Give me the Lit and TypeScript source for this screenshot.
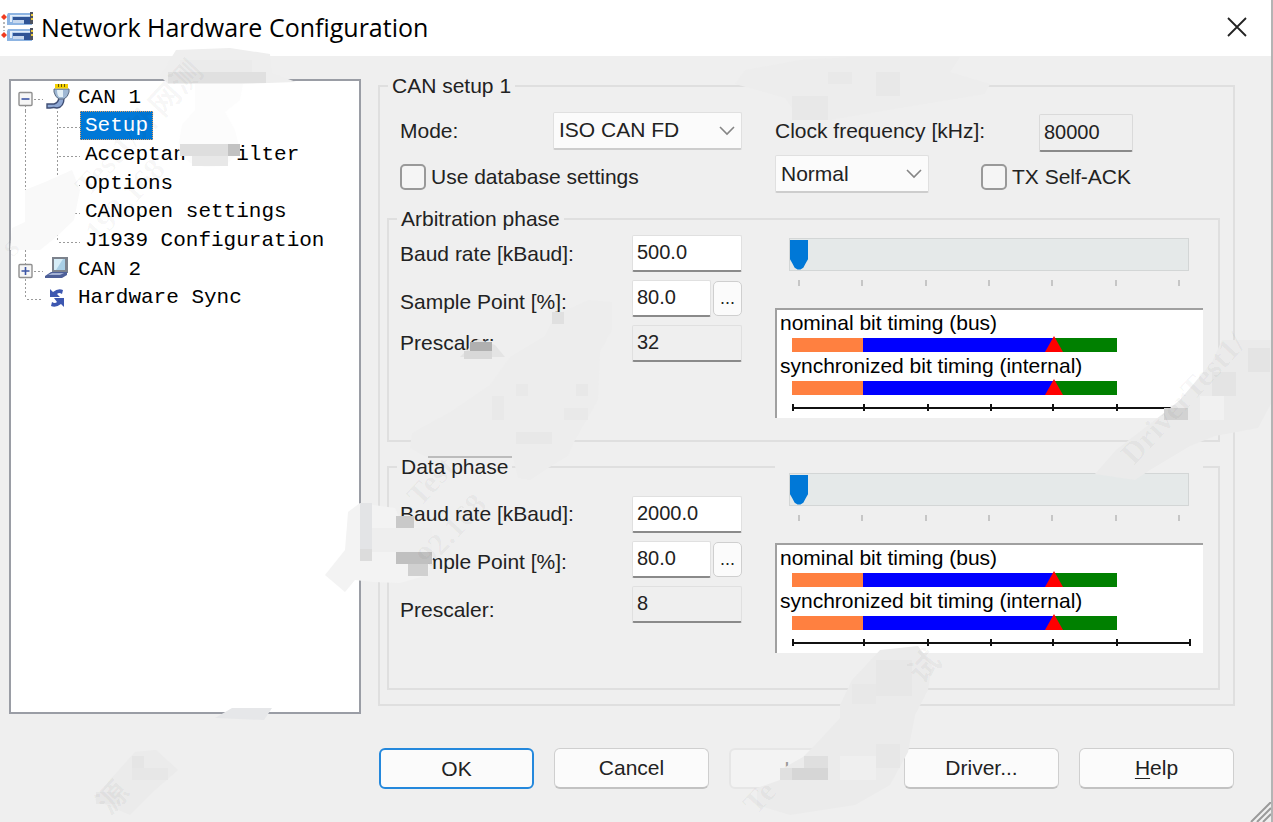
import { LitElement, html, svg, css } from "lit";
import { customElement, property, state } from "lit/decorators.js";

type Cell = [x: number, y: number, w: number, h: number, color: string];

interface Phase {
  id: string;
  title: string;
  baud: string;
  sample: string;
  prescaler: string;
}

const PHASES: Phase[] = [
  { id: "arbitration", title: "Arbitration phase", baud: "500.0", sample: "80.0", prescaler: "32" },
  { id: "data", title: "Data phase", baud: "2000.0", sample: "80.0", prescaler: "8" },
];

const CHILDREN = ["Setup", "Acceptance Filter", "Options", "CANopen settings", "J1939 Configuration"];

@customElement("bit-timing")
class BitTiming extends LitElement {
  static styles = css`
    :host {
      display: block;
      background: #fff;
      border-top: 2px solid #a0a0a0;
      border-left: 2px solid #a0a0a0;
      padding: 0 12px 7px 3px;
      color: #000;
    }
    .caption {
      line-height: 26px;
      white-space: nowrap;
    }
    .area {
      margin: 2px 0 1px 12px;
    }
    .bar {
      display: flex;
      position: relative;
      height: 14px;
      width: 81.4%;
    }
    .sync {
      background: #ff8040;
      flex: 71;
    }
    .seg1 {
      background: #0000ff;
      flex: 190;
    }
    .seg2 {
      background: #008000;
      flex: 63;
    }
    .marker {
      position: absolute;
      left: 80.6%;
      bottom: 0;
      margin-left: -9px;
      width: 18px;
      height: 16px;
      fill: #f00;
    }
    .axis {
      display: flex;
      height: 7px;
      margin: 9px 0 0 12px;
      border-right: 2px solid #111;
      background: linear-gradient(#111, #111) center / 100% 2px no-repeat;
    }
    .tick {
      border-left: 2px solid #111;
    }
  `;

  private bar() {
    return html`<div class="bar">
      <span class="sync"></span><span class="seg1"></span><span class="seg2"></span>
      <svg class="marker" viewBox="0 0 18 16"><path d="M9 0 L18 16 H0 Z" /></svg>
    </div>`;
  }

  render() {
    return html`
      <div class="caption">nominal bit timing (bus)</div>
      <div class="area">${this.bar()}</div>
      <div class="caption">synchronized bit timing (internal)</div>
      <div class="area">${this.bar()}</div>
      <div class="axis">
        ${[71, 64, 63, 62, 64, 73].map((n) => html`<span class="tick" style="flex:${n}"></span>`)}
      </div>
    `;
  }
}

@customElement("hardware-tree")
class HardwareTree extends LitElement {
  @state() private selected = "Setup";

  static styles = css`
    :host {
      display: block;
      box-sizing: border-box;
      background: #fff;
      border: 2px solid #9a9da5;
      padding: 2px 7px;
      font: 21px "Liberation Mono", "DejaVu Sans Mono", monospace;
      color: #000;
    }
    .list {
      display: grid;
      grid-auto-rows: 1fr;
      height: 229px;
      margin: 0;
      padding: 0;
      list-style: none;
    }
    .row {
      display: flex;
      align-items: center;
      min-height: 0;
      white-space: nowrap;
    }
    .toggle {
      border: 0;
      padding: 0;
      background: none;
      display: flex;
    }
    .icon {
      flex: none;
      width: 26px;
      height: 26px;
      margin-right: 3px;
    }
    .lines {
      flex: none;
      height: 29px;
    }
    .label {
      padding: 0 4px;
      line-height: 27px;
      border: 1px dotted transparent;
      cursor: default;
    }
    .icon + .label {
      padding-left: 3px;
    }
    .selected {
      background: #0078d7;
      color: #fff;
      border-color: #e8a060;
    }
  `;

  private expander(open: boolean) {
    return html`<button class="toggle" aria-label=${open ? "Collapse" : "Expand"}>
      <svg class="lines" width="27" viewBox="0 0 27 29" fill="none">
        <path d="M7.5 ${open ? 22 : 0} V29" stroke="#9a9a9a" stroke-dasharray="2 2" />
        <path d="M16 16.5 H25" stroke="#9a9a9a" stroke-dasharray="2 2" />
        <rect x="1" y="9.5" width="13" height="13" rx="1" fill="#f6f6f6" stroke="#8f8f8f" stroke-width="1.4" />
        <path d="M3.5 16 H11.5 ${open ? "" : "M7.5 12 V20"}" stroke="#3c55a5" stroke-width="1.6" />
      </svg>
    </button>`;
  }

  private branch(last: boolean) {
    return html`<svg class="lines" width="62" viewBox="0 0 62 29" fill="none">
      <path
        d="M7.5 0 V29 M39.5 0 V${last ? 16 : 29} M41 16.5 H62"
        stroke="#9a9a9a"
        stroke-dasharray="2 2"
      />
    </svg>`;
  }

  private plug() {
    return html`<svg class="icon" viewBox="0 0 26 26" fill="none">
      <path d="M2 24 V20 H9 Q13 19 14 14 H19 Q19 23 12 24 Q9 23 5 24 Z" fill="#8fa8d4" stroke="#3f4e74" stroke-width="1.4" />
      <path d="M9 5 H24 V8 Q23 13 19 15 H14 Q10 13 9 8 Z" fill="#9fb8d4" stroke="#5a6a80" />
      <path d="M12 6 H18 V13 H14 Q12 11 12 6" fill="#e4f0f6" />
      <path d="M10 4.5 V0 H23 V4.5 Z" fill="#f4d000" />
      <path d="M13.5 0 V3 M16.5 0 V3 M19.5 0 V3" stroke="#6a5a00" />
    </svg>`;
  }

  private laptop() {
    return html`<svg class="icon" viewBox="0 0 26 26" fill="none">
      <path d="M7 1 H23 V17 H7 Z" fill="#7c828c" />
      <path d="M9 3 H20 V14 H9 Z" fill="#a9cfe6" />
      <path d="M9 3 H18 L11 14 H9 Z" fill="#d6edf8" />
      <path d="M6 16 H22 V19 L17 22 H0 V20 Z" fill="#4d5f98" />
      <path d="M7 17 H19 L15 19 H3 Z" fill="#a3b1d4" />
    </svg>`;
  }

  private syncArrows() {
    return html`<svg class="icon" viewBox="0 0 26 26" fill="none">
      <path d="M5 4 L8 7 Q13 3 18 5 L17 9 Q14 7 12 9 L15 12 H5 Z" fill="#3d57b0" />
      <path d="M19 22 L16 19 Q11 23 6 21 L7 17 Q10 19 12 17 L9 13 H19 Z" fill="#3d57b0" />
    </svg>`;
  }

  render() {
    return html`<ul class="list" role="tree" aria-label="Channels">
      <li class="row" role="treeitem">${this.expander(true)}${this.plug()}<span class="label">CAN 1</span></li>
      ${CHILDREN.map(
        (name, i) => html`<li class="row" role="treeitem">
          ${this.branch(i === CHILDREN.length - 1)}<span
            class="label ${name === this.selected ? "selected" : ""}"
            @click=${() => (this.selected = name)}
            >${name}</span
          >
        </li>`
      )}
      <li class="row" role="treeitem">${this.expander(false)}${this.laptop()}<span class="label">CAN 2</span></li>
      <li class="row" role="treeitem">
        <svg class="lines" width="27" viewBox="0 0 27 29" fill="none">
          <path d="M7.5 0 V16 M9 16.5 H25" stroke="#9a9a9a" stroke-dasharray="2 2" />
        </svg>
        ${this.syncArrows()}<span class="label">Hardware Sync</span>
      </li>
    </ul>`;
  }
}

@customElement("phase-group")
class PhaseGroup extends LitElement {
  @property({ attribute: false }) phase!: Phase;

  static styles = css`
    :host {
      display: flex;
      flex: 1;
    }
    .group {
      flex: 1;
      min-width: 0;
      margin: 0;
      padding: 0;
      border: 2px solid #dfdfdf;
    }
    .legend {
      margin-left: 8px;
      padding: 0 4px;
      line-height: 26px;
    }
    .body {
      display: grid;
      grid-template-columns: 232px 110px 1fr;
      padding: 0 15px 0 11px;
    }
    .labels {
      display: grid;
      align-content: start;
      align-items: center;
    }
    .arbitration .labels {
      grid-template-rows: 44px 52px 30px;
    }
    .data .labels {
      grid-template-rows: 68px 28px 68px;
    }
    .fields {
      display: grid;
      align-content: start;
      row-gap: 8px;
      padding-top: 3px;
    }
    .data .fields {
      padding-top: 16px;
    }
    .pair {
      display: flex;
      gap: 2px;
      align-items: center;
    }
    .field {
      box-sizing: border-box;
      width: 100%;
      min-width: 0;
      height: 37px;
      padding: 0 4px 1px;
      border: 1px solid #e0e0e0;
      border-bottom: 2px solid #8a8a8a;
      border-radius: 2px;
      background: #fff;
      font: 20px "Liberation Sans", Arial, sans-serif;
      color: #222;
    }
    .field[readonly] {
      background: #efefef;
    }
    .more {
      flex: none;
      box-sizing: border-box;
      width: 29px;
      height: 35px;
      padding: 0;
      border: 1px solid #cfcfcf;
      border-radius: 5px;
      background: #fbfbfb;
      font: 18px "Liberation Sans", Arial, sans-serif;
      color: #222;
    }
    .timing {
      position: relative;
      margin: -1px 0 0 33px;
      background: #efefef;
      padding-top: 7px;
    }
    .data .timing {
      margin-top: -14px;
    }
    .slider {
      display: block;
      box-sizing: border-box;
      width: calc(100% - 28px);
      height: 33px;
      margin: 0 0 0 14px;
      padding: 0;
      border: 1px solid #d3d6d6;
      background: #e5e9e9;
      appearance: none;
      -webkit-appearance: none;
    }
    .slider::-webkit-slider-thumb {
      -webkit-appearance: none;
      width: 18px;
      height: 30px;
      background: #0078d7;
      clip-path: polygon(0 0, 100% 0, 100% 66%, 88% 78%, 74% 94%, 58% 100%, 42% 100%, 26% 94%, 12% 78%, 0 66%);
    }
    .ticks {
      display: flex;
      justify-content: space-between;
      height: 6px;
      margin: 9px 23px 22px;
    }
    .tick {
      width: 2px;
      background: #c6c6c6;
    }
  `;

  render() {
    const p = this.phase;
    return html`<fieldset class="group ${p.id}">
      <legend class="legend">${p.title}</legend>
      <div class="body">
        <div class="labels">
          <label for="baud">Baud rate [kBaud]:</label>
          <label for="sample">Sample Point [%]:</label>
          <label for="prescaler">Prescaler:</label>
        </div>
        <div class="fields">
          <input id="baud" class="field" .value=${p.baud} />
          <div class="pair">
            <input id="sample" class="field" .value=${p.sample} />
            <button class="more" aria-label="Select sample point">...</button>
          </div>
          <input id="prescaler" class="field" readonly .value=${p.prescaler} />
        </div>
        <div class="timing">
          <input class="slider" type="range" min="0" max="12" value="0" aria-label="${p.title} baud rate" />
          <div class="ticks">${Array.from({ length: 7 }, () => html`<span class="tick"></span>`)}</div>
          <bit-timing></bit-timing>
        </div>
      </div>
    </fieldset>`;
  }
}

/* Soft blotches and faint diagonal stamps lying over the dialog. */
const SHAPES: [string, string][] = [
  ["160,76 176,50 230,48 270,54 272,73 296,82 240,84 168,84", "#eeeeee"],
  ["195,84 243,84 240,100 225,112 235,130 240,150 225,166 205,167 190,163 178,148 182,125 195,110", "#fcfcfc"],
  ["25,190 45,182 72,170 80,190 74,220 55,238 40,250 10,250 12,228 25,222", "#f9f9f9"],
  ["735,84 745,70 800,60 850,57 960,57 950,72 990,84 985,94 900,108 830,120 800,120 785,98", "#ededed"],
  ["460,357 478,339 495,345 505,357", "#e4e4e4"],
  ["552,322 562,312 588,300 612,302 612,330 600,352 598,400 575,440 568,456 548,468 530,480 518,478 513,458 428,458 410,448 412,433 450,412 490,385 510,357 545,336", "#ededed"],
  ["325,575 345,550 348,512 360,503 395,508 402,524 425,530 434,555 428,575 400,583 372,582 355,580 345,592", "#f3f3f3"],
  ["215,718 232,708 272,708 264,720", "#e6e7e9"],
  ["1095,474 1116,450 1155,420 1180,400 1212,362 1222,340 1273,340 1273,400 1258,428 1215,436 1190,446 1150,470 1135,480", "#ebebeb"],
  ["840,705 852,680 880,650 918,646 932,665 928,690 915,715 908,752 890,785 855,805 790,815 757,805 757,788 780,780 780,770 803,757 815,745 840,718", "#ebebeb"],
  ["95,800 110,780 135,752 156,750 178,770 155,790 130,815", "#ebebeb"],
];

const CELLS: Cell[] = [
  [168, 72, 98, 11, "#e0e0e0"],
  [180, 60, 72, 12, "#ebebeb"],
  [180, 144, 60, 12, "#dedede"],
  [228, 144, 12, 12, "#c2c2c2"],
  [192, 156, 36, 10, "#e8e8e8"],
  [828, 72, 24, 12, "#e9e9e9"],
  [792, 96, 36, 24, "#e8e8e8"],
  [876, 72, 24, 24, "#e8e8e8"],
  [470, 342, 22, 9, "#b0b0b0"],
  [464, 351, 28, 8, "#d8d8d8"],
  [552, 312, 12, 12, "#e0e0e0"],
  [516, 384, 12, 12, "#e9e9e9"],
  [576, 384, 12, 12, "#e8e8e8"],
  [564, 408, 24, 12, "#e9e9e9"],
  [492, 396, 12, 24, "#e9e9e9"],
  [516, 432, 36, 12, "#e8e8e8"],
  [428, 456, 84, 2, "#bcbcbc"],
  [360, 503, 12, 46, "#e3e4e6"],
  [360, 549, 12, 12, "#dcdcdc"],
  [396, 516, 18, 12, "#c9c9c9"],
  [396, 552, 36, 12, "#c0c0c0"],
  [408, 564, 20, 12, "#d0d0d0"],
  [372, 528, 60, 24, "#eeeeee"],
  [1164, 408, 24, 12, "#d2d2d2"],
  [1212, 372, 24, 24, "#e4e4e4"],
  [1248, 348, 22, 24, "#e4e4e4"],
  [1200, 396, 24, 24, "#f1f1f1"],
  [876, 660, 36, 36, "#e7e7e7"],
  [852, 684, 24, 20, "#e8e8e8"],
  [792, 768, 36, 12, "#d6d6d6"],
  [780, 768, 12, 12, "#e0e0e0"],
  [804, 756, 24, 12, "#dfdfdf"],
  [840, 756, 36, 24, "#efefef"],
  [876, 744, 24, 24, "#e7e7e7"],
  [132, 756, 12, 12, "#e5e5e5"],
  [132, 768, 36, 12, "#e7e7e7"],
  [96, 792, 24, 12, "#e7e7e7"],
];

const STAMPS: [number, number, string][] = [
  [13, 258, "s"],
  [88, 198, "Test1/外网测"],
  [98, 244, "192.168"],
  [420, 508, "Test"],
  [430, 568, "92.168"],
  [1134, 466, "DriverTest1/"],
  [756, 816, "Te"],
  [922, 685, "试"],
  [110, 816, "源"],
];

@customElement("app-root")
class AppRoot extends LitElement {
  static styles = css`
    :host {
      display: block;
    }
    .dialog {
      position: relative;
      box-sizing: border-box;
      display: flex;
      flex-direction: column;
      min-height: 100vh;
      overflow: hidden;
      background: #efefef;
      border-right: 2px solid #b4b4b4;
      font: 21px "Liberation Sans", Arial, sans-serif;
      color: #222;
    }
    .title {
      display: flex;
      align-items: center;
      gap: 8px;
      box-sizing: border-box;
      height: 56px;
      padding: 0 23px 3px 0;
      background: #fff;
    }
    .logo {
      width: 33px;
      height: 30px;
    }
    .heading {
      flex: 1;
      margin: 0;
      font: 25px "Open Sans", "Noto Sans", sans-serif;
      color: #000;
    }
    .close {
      display: flex;
      padding: 0;
      border: 0;
      background: none;
    }
    .main {
      flex: 1;
      display: grid;
      grid-template-columns: 352px 1fr;
      gap: 17px;
      padding: 17px 36px 0 9px;
    }
    .tree {
      margin-top: 6px;
    }
    .setup {
      display: flex;
      flex-direction: column;
      min-width: 0;
      margin: 0 0 8px;
      padding: 0 13px 14px 7px;
      border: 2px solid #dfdfdf;
    }
    .legend {
      margin-left: 1px;
      padding: 0 4px;
      line-height: 26px;
    }
    .inner {
      display: flex;
      flex-direction: column;
      gap: 12px;
      height: 100%;
    }
    .options {
      display: grid;
      grid-template-columns: 153px 189px 33px 206px 58px 94px;
      grid-template-rows: 43px 44px;
      row-gap: 3px;
      align-items: center;
      padding: 10px 0 0 13px;
      margin-bottom: -5px;
      white-space: nowrap;
    }
    .combo {
      display: grid;
      align-items: center;
    }
    .mode {
      grid-column: 2;
    }
    .clock {
      grid-column: 4;
    }
    .khz {
      grid-column: 6;
      align-self: end;
    }
    .database {
      grid-column: 1 / 3;
    }
    .ack-mode {
      grid-column: 4;
      width: 154px;
      align-self: start;
    }
    .ack {
      grid-column: 5 / 7;
    }
    .select {
      grid-area: 1 / 1;
      box-sizing: border-box;
      width: 100%;
      height: 38px;
      padding: 0 5px 1px;
      border: 1px solid #e0e0e0;
      border-bottom: 2px solid #cdcdcd;
      border-radius: 2px;
      background: #fbfbfb;
      font: inherit;
      color: inherit;
      appearance: none;
    }
    .chevron {
      grid-area: 1 / 1;
      justify-self: end;
      margin-right: 7px;
      pointer-events: none;
    }
    .field {
      box-sizing: border-box;
      display: block;
      width: 100%;
      height: 38px;
      padding: 0 4px 1px;
      border: 1px solid #dadada;
      border-bottom: 2px solid #8a8a8a;
      border-radius: 2px;
      background: #efefef;
      font: 20px "Liberation Sans", Arial, sans-serif;
      color: #222;
    }
    .check {
      display: flex;
      align-items: center;
      gap: 5px;
    }
    .box {
      appearance: none;
      flex: none;
      box-sizing: border-box;
      width: 26px;
      height: 26px;
      margin: 0;
      border: 2px solid #999;
      border-radius: 5px;
      background: #f5f5f5;
    }
    .footer {
      display: grid;
      grid-template-columns: repeat(5, 1fr);
      gap: 20px;
      padding: 34px 37px 33px 379px;
    }
    .button {
      height: 41px;
      border: 1px solid #cfcfcf;
      border-bottom: 2px solid #c2c2c2;
      border-radius: 6px;
      background: #fbfbfb;
      font: inherit;
      color: inherit;
    }
    .primary {
      border: 2px solid #2488dc;
    }
    .button:disabled {
      border: 2px solid #e6e6e6;
      background: #f3f3f3;
      color: #9a9a9a;
    }
    .key {
      text-decoration: underline 1px;
      text-underline-offset: 3px;
    }
    .overlay {
      position: absolute;
      top: 0;
      left: 0;
      width: 1273px;
      height: 822px;
      pointer-events: none;
    }
    .stamp {
      font: bold 31px "Liberation Serif", "Noto Sans CJK SC", serif;
      fill: #000;
      fill-opacity: 0.035;
    }
    .grip {
      position: absolute;
      right: 0;
      bottom: 0;
    }
  `;

  private chevron() {
    return html`<svg class="chevron" width="16" height="10" viewBox="0 0 16 10" fill="none">
      <path d="M1 1 L8 8 L15 1" stroke="#858585" stroke-width="1.6" />
    </svg>`;
  }

  private logo() {
    const plug = (y: number) => svg`
      <path d="M8 ${y + 1} H32 V${y + 13} H7 V${y + 3} Z" fill="#8db4e2" />
      <path d="M10 ${y + 3} H30 V${y + 4.5} H12 V${y + 10} H10 Z" fill="#e3eefa" />
      <path d="M13 ${y + 5} H30 V${y + 12} H24 V${y + 8.5} H13 Z" fill="#2f5496" />
      <path d="M13 ${y + 8} H24 V${y + 11} H13 Z" fill="#c7d8ee" />
      <path d="M30 ${y} H33 V${y + 12} H30 Z" fill="#4d5260" />
      <path d="M31 ${y + 2} H33 V${y + 4} H31 Z M31 ${y + 6} H33 V${y + 8} H31 Z" fill="#e8c840" />`;
    return html`<svg class="logo" viewBox="0 0 33 30" fill="none">
      ${plug(0)}${plug(16)}
      <path d="M4 2 L7 5 L4 8 L1 5 Z M4 20 L7 23 L4 26 L1 23 Z" fill="#f03c20" />
      <path d="M4 10 V19" stroke="#707070" stroke-dasharray="2 2" />
    </svg>`;
  }

  private overlay() {
    return html`<svg class="overlay" viewBox="0 0 1273 822" aria-hidden="true">
      ${SHAPES.map(([points, fill]) => svg`<polygon points=${points} fill=${fill} />`)}
      ${CELLS.map(([x, y, w, h, fill]) => svg`<rect x=${x} y=${y} width=${w} height=${h} fill=${fill} />`)}
      ${STAMPS.map(([x, y, t]) => svg`<text class="stamp" transform="translate(${x} ${y}) rotate(-47)">${t}</text>`)}
    </svg>`;
  }

  render() {
    return html`<div class="dialog">
      <header class="title">
        ${this.logo()}
        <h1 class="heading">Network Hardware Configuration</h1>
        <button class="close" aria-label="Close">
          <svg width="22" height="22" viewBox="0 0 22 22" fill="none">
            <path d="M2 2 L20 20 M20 2 L2 20" stroke="#222" stroke-width="1.8" />
          </svg>
        </button>
      </header>
      <main class="main">
        <hardware-tree class="tree"></hardware-tree>
        <fieldset class="setup">
          <legend class="legend">CAN setup 1</legend>
          <div class="inner">
            <div class="options">
              <label for="mode">Mode:</label>
              <div class="combo mode">
                <select id="mode" class="select"><option>ISO CAN FD</option></select>
                ${this.chevron()}
              </div>
              <label class="clock" for="clock">Clock frequency [kHz]:</label>
              <div class="khz"><input id="clock" class="field" readonly value="80000" /></div>
              <label class="check database"><input class="box" type="checkbox" />Use database settings</label>
              <div class="combo ack-mode">
                <select class="select" aria-label="Operating mode"><option>Normal</option></select>
                ${this.chevron()}
              </div>
              <label class="check ack"><input class="box" type="checkbox" />TX Self-ACK</label>
            </div>
            ${PHASES.map((p) => html`<phase-group .phase=${p}></phase-group>`)}
          </div>
        </fieldset>
      </main>
      <footer class="footer">
        <button class="button primary">OK</button>
        <button class="button">Cancel</button>
        <button class="button" disabled>Limit</button>
        <button class="button">Driver...</button>
        <button class="button"><span class="key">H</span>elp</button>
      </footer>
      ${this.overlay()}
      <svg class="grip" width="22" height="20" viewBox="0 0 22 20" fill="none" aria-hidden="true">
        <path d="M2 20 L22 0 M8 20 L22 6 M14 20 L22 12" stroke="#9a9a9a" stroke-width="2" />
      </svg>
    </div>`;
  }
}
